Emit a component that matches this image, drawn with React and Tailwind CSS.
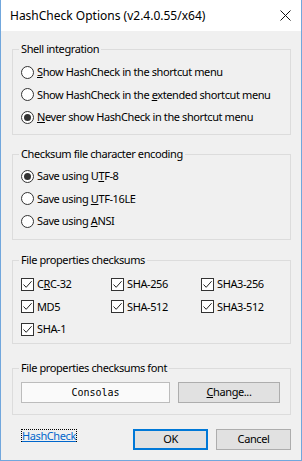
import React from 'react'

const FONT = { fontFamily: '"Noto Sans", "Open Sans", sans-serif' }

function Radio({ checked, children, h }) {
  return (
    <div className={`flex items-center ${h}`}>
      <span className="flex h-[13px] w-[13px] shrink-0 items-center justify-center rounded-full border border-[#333] bg-white">
        {checked && <span className="h-[7px] w-[7px] rounded-full bg-[#333]" />}
      </span>
      <span className="ml-[3px] whitespace-nowrap text-[11px] leading-[16px] tracking-[-0.4px] text-black">{children}</span>
    </div>
  )
}

function Check({ children }) {
  return (
    <div className="flex items-center">
      <span className="flex h-[13px] w-[13px] shrink-0 items-center justify-center border border-[#333] bg-white">
        <svg width="11" height="11" viewBox="0 0 11 11">
          <path d="M1.5 5.5 L4.2 8.3 L9.6 2.2" fill="none" stroke="#222" strokeWidth="1" />
        </svg>
      </span>
      <span className="ml-[3px] whitespace-nowrap text-[11px] leading-[16px] tracking-[-0.4px] text-black">{children}</span>
    </div>
  )
}

function Group({ label, className, children }) {
  return (
    <fieldset className={`border border-[#dcdcdc] px-[8px] ${className}`}>
      <legend className="-ml-[2px] whitespace-nowrap px-[2px] text-[11px] leading-[16px] tracking-[-0.4px] text-black">{label}</legend>
      {children}
    </fieldset>
  )
}

export default function App() {
  return (
    <div
      className="flex h-[461px] w-[302px] flex-col border-x border-b border-[#71a7dd] bg-[#f0f0f0]"
      style={FONT}
    >
      {/* title bar */}
      <div className="flex h-[31px] shrink-0 items-center justify-between bg-white pl-[9px] pr-[9px]">
        <span className="text-[12px] text-black">HashCheck Options (v2.4.0.55/x64)</span>
        <svg width="11" height="11" viewBox="0 0 11 11" className="mr-[1px]">
          <path d="M0.5 0.5 L10.5 10.5 M10.5 0.5 L0.5 10.5" stroke="#111" strokeWidth="1" />
        </svg>
      </div>

      <div className="flex flex-1 flex-col pl-[11px] pr-[10px]">
        <Group label="Shell integration" className="mt-[10px] pt-[4px] pb-[6px]">
          <Radio h="h-[22px]"><u>S</u>how HashCheck in the shortcut menu</Radio>
          <Radio h="h-[23px]">Show HashCheck in the <u>e</u>xtended shortcut menu</Radio>
          <Radio h="h-[22px]" checked><u>N</u>ever show HashCheck in the shortcut menu</Radio>
        </Group>

        <Group label="Checksum file character encoding" className="mt-[11px] pt-[3px] pb-[7px]">
          <Radio h="h-[22px]" checked>Save using U<u>T</u>F-8</Radio>
          <Radio h="h-[23px]">Save using <u>U</u>TF-16LE</Radio>
          <Radio h="h-[22px]">Save using <u>A</u>NSI</Radio>
        </Group>

        <Group label="File properties checksums" className="mt-[12px] pt-[5px] pb-[3px]">
          <div className="grid grid-cols-[90px_90px_1fr] grid-rows-[22px_23px_22px] items-center">
            <Check>C<u>R</u>C-32</Check>
            <Check>SHA-256</Check>
            <Check>SHA3-256</Check>
            <Check>MD5</Check>
            <Check>SHA-512</Check>
            <Check>SHA3-512</Check>
            <Check>SHA-1</Check>
          </div>
        </Group>

        <Group label="File properties checksums font" className="mt-[16px] pt-[6px] pb-[11px]">
          <div className="flex">
            <div className="flex h-[21px] w-[149px] items-center justify-center border border-[#bcbcbc] bg-[#fafafa]">
              <span className="text-[10px] text-black" style={{ fontFamily: '"DejaVu Sans Mono", "Liberation Mono", monospace' }}>
                Consolas
              </span>
            </div>
            <button className="ml-[8px] flex h-[21px] w-[102px] items-center justify-center border border-[#adadad] bg-[#e1e1e1] text-[11px] tracking-[-0.4px] text-black">
              <span><u>C</u>hange...</span>
            </button>
          </div>
        </Group>

        <div className="mt-[14px] flex items-start">
          <span className="ml-[9px] border border-dotted border-black text-[11px] leading-[11px] tracking-[-0.4px] text-[#0066cc] underline">
            HashCheck
          </span>
          <button className="ml-auto flex h-[21px] w-[75px] items-center justify-center border-2 border-[#0078d7] bg-[#e1e1e1] text-[11px] tracking-[-0.4px] text-black">
            OK
          </button>
          <button className="ml-[8px] flex h-[21px] w-[75px] items-center justify-center border border-[#adadad] bg-[#e1e1e1] text-[11px] tracking-[-0.4px] text-black">
            Cancel
          </button>
        </div>
      </div>
    </div>
  )
}
